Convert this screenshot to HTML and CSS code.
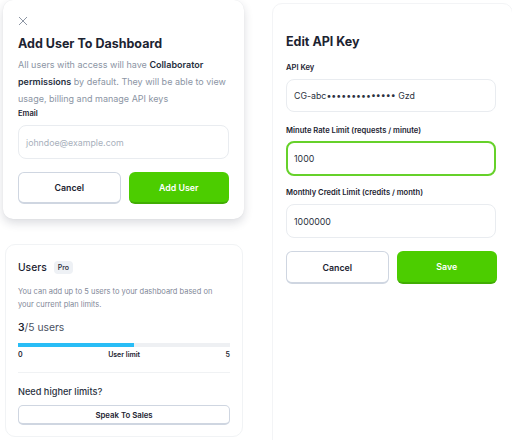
FILE: index.html
```html
<!DOCTYPE html>
<html>
<head>
<meta charset="utf-8">
<link rel="stylesheet" href="styles.css">
</head>
<body>
<div class="page">
  <div class="left">
    <div class="modal">
      <svg class="close" width="10" height="10" viewBox="0 0 10 10"><path d="M1 1L9 9M9 1L1 9" stroke="#8d96a4" stroke-width="1" fill="none"/></svg>
      <h2 class="title">Add User To Dashboard</h2>
      <p class="desc">All users with access will have <b>Collaborator</b> <b>permissions</b> by default. They will be able to view usage, billing and manage API keys</p>
      <div class="label email">Email</div>
      <div class="input placeholder">johndoe@example.com</div>
      <div class="actions">
        <button class="btn secondary">Cancel</button>
        <button class="btn primary">Add User</button>
      </div>
    </div>
    <div class="users">
      <div class="users-head"><span class="users-title">Users</span><span class="badge">Pro</span></div>
      <p class="users-desc">You can add up to 5 users to your dashboard based on your current plan limits.</p>
      <div class="count"><b>3</b>/5 users</div>
      <div class="bar"><div class="fill" style="width:54.5%"></div></div>
      <div class="scale"><span>0</span><span>User limit</span><span>5</span></div>
      <div class="divider"></div>
      <div class="need">Need higher limits?</div>
      <button class="btn small">Speak To Sales</button>
    </div>
  </div>
  <div class="right">
    <h2 class="title">Edit API Key</h2>
    <div class="label r1">API Key</div>
    <div class="input i1">CG-abc•••••••••••••• Gzd</div>
    <div class="label r2">Minute Rate Limit (requests / minute)</div>
    <div class="input focus">1000</div>
    <div class="label r3">Monthly Credit Limit (credits / month)</div>
    <div class="input i3">1000000</div>
    <div class="actions">
      <button class="btn secondary">Cancel</button>
      <button class="btn primary">Save</button>
    </div>
  </div>
</div>
</body>
</html>
```
FILE: styles.css
```css
* { box-sizing: border-box; }
html, body { margin: 0; padding: 0; }
body {
  width: 512px; height: 440px; overflow: hidden; background: #fff;
  font-family: Inter, "Noto Sans", sans-serif; color: #1c2331;
}
.page { display: flex; align-items: flex-start; }
.left { width: 250px; padding-left: 3px; flex-shrink: 0; }
.modal {
  width: 241px; background: #fff; border-radius: 10px;
  box-shadow: 0 4px 10px rgba(30, 40, 60, 0.16), 0 0 1px rgba(30,40,60,0.1);
  padding: 16px 15px 15px; position: relative; z-index: 1;
}
.close { display: block; }
.title { margin: 8px 0 0; font-size: 12.5px; font-weight: 700; line-height: 20px; }
.desc { margin: 2px 0 0; font-size: 9px; line-height: 17px; color: #8c95a4; }
.desc b { color: #27303e; font-weight: 600; }
.label { font-size: 7.6px; font-weight: 600; line-height: 12px; }
.label.email { margin-top: 1px; }
.input {
  height: 34px; border: 1px solid #e9ecf0; border-radius: 8px; margin-top: 5px;
  display: flex; align-items: center; padding: 0 7px; font-size: 8.8px; color: #2b3240;
}
.input.placeholder { color: #a8b0bc; }
.actions { display: flex; gap: 8px; margin-top: 13px; }
.btn {
  font-family: inherit; flex: 1; height: 32px; border-radius: 6px; font-size: 8.8px; font-weight: 600; cursor: pointer; padding: 0;
}
.btn.secondary { background: #fff; border: 1.5px solid #cfd6e1; border-bottom-width: 2.5px; color: #1c2331; }
.btn.primary { background: #4ccd00; border: none; border-bottom: 2px solid #41ad03; color: #fff; }
.users {
  margin-top: 25px; margin-left: 2px; width: 238px; height: 193px;
  border: 1px solid #f1f3f5; border-radius: 10px; padding: 14px 12px;
}
.users-head { display: flex; align-items: center; gap: 7px; height: 16px; }
.users-title { font-size: 10.3px; font-weight: 500; }
.badge { background: #eef1f5; font-size: 7px; padding: 2px 4px; border-radius: 4px; font-weight: 500; line-height: 9px; }
.users-desc { margin: 10px 0 0; font-size: 7.5px; line-height: 13px; color: #7f8898; }
.count { margin-top: 8px; font-size: 10.3px; color: #4a5262; line-height: 16px; }
.count b { color: #1c2331; font-weight: 600; }
.bar { margin-top: 8px; height: 4px; background: #eef0f3; }
.fill { height: 100%; background: #29bdf6; }
.scale { display: flex; justify-content: space-between; font-size: 7px; font-weight: 600; margin-top: 2px; line-height: 12px; }
.divider { height: 1px; background: #f0f2f4; margin-top: 11px; }
.need { margin-top: 12px; font-size: 9.2px; font-weight: 500; line-height: 14px; color: #2b3240; }
.btn.small {
  display: block; width: 100%; height: 20px; margin-top: 6px; font-size: 7.8px;
  background: #fff; border: 1.5px solid #cfd6e1; border-bottom-width: 2.5px; border-radius: 5px; color: #1c2331;
}
.right {
  margin-left: 22px; margin-top: 3px; width: 250px; height: 460px;
  border: 1px solid #f3f4f6; border-radius: 10px; padding: 0 15px 0 13px;
}
.right .title { margin-top: 28px; }
.right .label.r1 { margin-top: 10px; }
.right .label.r2 { margin-top: 13px; }
.right .label.r3 { margin-top: 11px; }
.right .input { width: 210px; margin-top: 5px; }
.right .input.i1 { height: 33px; }
.right .input.focus { border: 2px solid #66d12a; height: 35px; margin-top: 4px; padding-left: 6px; }
.right .actions { width: 211px; margin-top: 13px; }
.right .btn { height: 33px; }
```
